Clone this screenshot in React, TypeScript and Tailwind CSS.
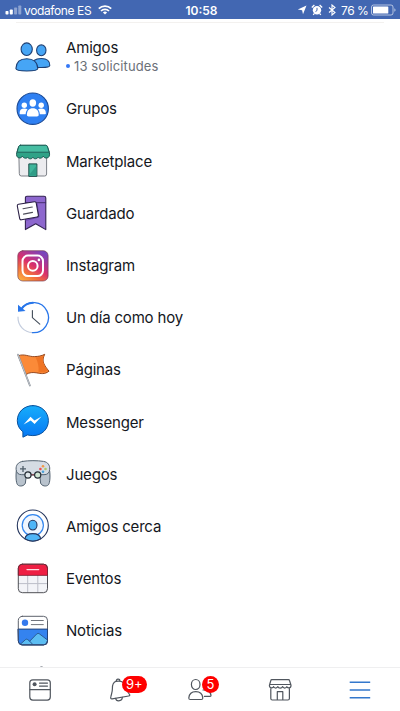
import type { ReactNode } from "react";

function Icon({ children }: { children: ReactNode }) {
  return (
    <svg viewBox="0 0 36 36" className="h-9 w-9 shrink-0" fill="none" strokeLinecap="round" strokeLinejoin="round">
      {children}
    </svg>
  );
}

const friends = (
  <Icon>
    <g fill="#46a5f5" stroke="#1d3f73" strokeWidth="1.1">
      <ellipse cx="26.3" cy="11.3" rx="4.7" ry="5.4" />
      <path d="M19 21.5c2-1.6 4.500-2 7.500-2 5 0 8.300 2.300 8.300 7 0 1.600-3.800 2-8.300 2h-6z" />
      <ellipse cx="11.700" cy="10.200" rx="5.600" ry="6.300" />
      <path d="M.9 29.500c.3-6.500 4.800-9.700 10.900-9.700s10.700 3.200 11 9.700c0 2-5.500 2.500-11 2.500S.9 31.500.9 29.500z" />
    </g>
  </Icon>
);

const groups = (
  <Icon>
    <circle cx="17.700" cy="17.700" r="15.700" fill="#2f80f2" stroke="#1c4a95" strokeWidth="1.100" />
    <g fill="#fff">
      <circle cx="9.300" cy="14.200" r="2.700" />
      <circle cx="26.200" cy="14.200" r="2.700" />
      <path d="M4.600 22.200c0-3.200 1.800-4.600 4.700-4.600 1.300 0 2.400.4 3.200 1-1.200 1.200-1.700 2.800-1.800 4.600H6c-.9 0-1.400-.3-1.400-1z" />
      <path d="M30.900 22.200c0-3.200-1.800-4.600-4.700-4.600-1.300 0-2.400.4-3.200 1 1.200 1.200 1.700 2.800 1.800 4.600h4.700c.9 0 1.400-.3 1.400-1z" />
      <ellipse cx="17.800" cy="12" rx="3.300" ry="3.700" />
      <path d="M11.900 23.800c0-4.300 2.200-6.500 5.900-6.500s5.900 2.200 5.900 6.500c0 1.200-.6 1.700-1.800 1.700h-8.200c-1.200 0-1.800-.5-1.800-1.700z" />
    </g>
  </Icon>
);

const marketplace = (
  <Icon>
    <path d="M4.300 13h27.300v18a2 2 0 0 1-2 2H6.300a2 2 0 0 1-2-2z" fill="#ececef" stroke="#7c8087" />
    <path d="M13.800 33V20.900h8.100V33z" fill="#3fb59b" stroke="#1f4f4b" />
    <path d="M14.500 31.500l6.800-8.500v9.500h-6.800z" fill="#2f9d87" />
    <path d="M5.500 2.300h25.200q1.300 0 1.700 1.300l2.100 6.200c.4 3-.6 5-2.600 5.200-1.900.2-3-.6-3.600-1.800-1 2-4 2.800-5.200 1-1.400 2-4 2.200-5.200.1-1.200 2.100-4 2-5.200-.1-1.300 1.800-4.300 1-5.300-1-.8 1.300-2 2-3.500 1.700-2-.5-2.700-2.500-2.200-5.100l2-6.200q.5-1.300 1.800-1.300z" fill="#2fa287" stroke="#1e5953" />
    <path d="M5.500 2.300h25.200q1.300 0 1.700 1.300l1.700 5.600H2.100l1.600-5.600q.5-1.300 1.800-1.300z" fill="#46bda2" stroke="#1e5953" strokeWidth=".9" />
  </Icon>
);

const saved = (
  <Icon>
    <path d="M12 1.300h17q1.800 0 1.800 1.800v31.500l-10.100-5.900-10.300 5.900V2.900q0-1.600 1.600-1.600z" fill="#8d67ce" stroke="#322252" strokeWidth="1.100" />
    <path d="M10.700 7.700h20" stroke="#3e2865" strokeWidth=".9" />
    <path d="M22 8l2 14-11.500 3h-2" stroke="#6745a8" strokeWidth="1" />
    <path d="M3.500 9.300l16-2.500q1.500-.2 1.700 1.200l2.200 12.200q.2 1.500-1.300 1.800L6.500 24.800q-1.500.3-1.800-1.200L2.300 11q-.2-1.500 1.200-1.700z" fill="#fff" stroke="#2a1f45" strokeWidth="1.100" />
    <path d="M8 13.700l9.300-1.700M8.500 19.100l9-1.700" stroke="#4d4d59" strokeWidth="1.100" />
  </Icon>
);

const instagram = (
  <Icon>
    <defs>
      <linearGradient id="ig" x1=".1" y1="1" x2=".75" y2="0">
        <stop offset="0" stopColor="#fdb33e" />
        <stop offset=".28" stopColor="#f3713c" />
        <stop offset=".55" stopColor="#d9306c" />
        <stop offset=".8" stopColor="#a43a9b" />
        <stop offset="1" stopColor="#7746bd" />
      </linearGradient>
    </defs>
    <rect x="2.800" y="2.700" width="30.300" height="30.300" rx="5" fill="url(#ig)" stroke="#774054" strokeOpacity=".75" strokeWidth=".9" />
    <rect x="7.500" y="7.600" width="20.500" height="20.500" rx="5.500" stroke="#fff" strokeWidth="2" />
    <circle cx="17.800" cy="17.900" r="4.800" stroke="#fff" strokeWidth="2" />
    <circle cx="23.900" cy="11.900" r="1.300" fill="#fff" />
  </Icon>
);

const onThisDay = (
  <Icon>
    <path d="M17.500 32.600A15 15 0 0 1 3 17" stroke="#c4cdde" strokeWidth="1.200" />
    <path d="M6.200 9A15 15 0 1 1 17.500 32.600" stroke="#2876ea" strokeWidth="1.300" />
    <path d="M6.500 9A14.500 14.500 0 0 1 18 2.800" stroke="#2876ea" strokeWidth="2" />
    <path d="M3 4.800v7l7.500-.7z" fill="#2876ea" />
    <path d="M17.400 10.500v7.200l7.400 6.400" stroke="#424c59" strokeWidth="1.100" />
  </Icon>
);

const pages = (
  <Icon>
    <path d="M3.700 3.600c5.500-2.200 10.800 1.400 16 1 3.700-.2 6.700-.6 10-2.300-1.600 3.500-2.200 6-1 8.900 1 2.600 3 5.200 5.300 8-4.500 3.500-8.300 2.300-12.200 1.700-4-.7-7.300-.6-10.700 1.500z" fill="#fb8a38" stroke="#8b3b12" strokeWidth=".9" />
    <path d="M20.500 5.200c3.500 0 5.900-.5 8.200-1.500-1.500 4.800-.4 8.800 4.300 14.900-4 2.500-7.600 1.700-9.500 1.300.5-4.900-.5-10.100-3-14.700z" fill="#ef7424" />
    <path d="M3 2.700L14.900 33.500" stroke="#8a9099" strokeWidth="1.800" />
    <path d="M3 2.700L14.900 33.500" stroke="#c2c7cd" strokeWidth=".9" />
  </Icon>
);

const messenger = (
  <Icon>
    <defs>
      <linearGradient id="ms" x1="0" y1="0" x2="0" y2="1">
        <stop offset="0" stopColor="#17adfb" />
        <stop offset="1" stopColor="#0678f4" />
      </linearGradient>
    </defs>
    <path d="M17.900 1.600C8.900 1.600 2.300 8.200 2.300 16.700c0 4.500 2.100 8.400 5.600 11.100v5.400l4.600-2.300c1.600.4 3.500.7 5.400.7 8.900 0 15.500-6.500 15.500-14.900S26.800 1.600 17.900 1.600z" fill="url(#ms)" stroke="#0b529d" strokeWidth="1" />
    <path d="M8.600 20.400l6.900-7.600 4 3.600 7-3.900-6.900 7.600-3.900-3.500z" fill="#fff" />
  </Icon>
);

const games = (
  <Icon>
    <path d="M1.300 15c-.6 5.500-.3 11.500 1.200 13.700 2.200 2.400 7 1.300 7.900-1.700l.9-8h13.400l.9 8c.9 3 5.700 4.100 7.900 1.700 1.500-2.200 1.800-8.200 1.200-13.700z" fill="#b9c3cd" stroke="#536270" />
    <path d="M7.500 5.400c6-1 15-1 21 0 4.500.7 6.500 3.900 6.200 7.900-.2 3.700-2.300 5.400-5.700 5.400H6.800c-3.400 0-5.500-1.700-5.700-5.400-.3-4 1.900-7.200 6.400-7.900z" fill="#d5dce4" stroke="#536270" />
    <path d="M5 12.900h6M8 9.900v6" stroke="#4f5e6a" strokeWidth="1.300" strokeLinecap="butt" />
    <path d="M16 18.800h4" stroke="#963d48" />
    <circle cx="13" cy="19" r="3.100" fill="#dfe6ea" stroke="#252d35" strokeWidth="1.200" />
    <circle cx="22.700" cy="19" r="3.100" fill="#cfe5d3" stroke="#252d35" strokeWidth="1.200" />
    <circle cx="28" cy="10.300" r="1.300" fill="#f39a45" />
    <circle cx="25.400" cy="13" r="1.300" fill="#ee4c4c" />
    <circle cx="30.500" cy="13" r="1.300" fill="#a9c96f" />
    <circle cx="28" cy="15.700" r="1.300" fill="#4ba1d9" />
  </Icon>
);

const nearby = (
  <Icon>
    <circle cx="17.800" cy="17.500" r="15.500" fill="#fff" stroke="#26375f" strokeWidth="1.100" />
    <circle cx="17.800" cy="17.300" r="10.600" fill="#f0f6ff" stroke="#3386ee" strokeWidth="1.200" />
    <path d="M9.900 30.800c.5-3.800 3.300-5.200 7.900-5.200s7.400 1.400 7.900 5.200a15.500 15.500 0 0 1-15.800 0z" fill="#4fb5f7" stroke="#26375f" strokeWidth="1.100" />
    <ellipse cx="17.800" cy="17.100" rx="4.200" ry="4.900" fill="#4fb5f7" stroke="#26375f" strokeWidth="1.100" />
  </Icon>
);

const events = (
  <Icon>
    <rect x="3.300" y="3.200" width="29.200" height="28.500" rx="4" fill="#f3f4f8" />
    <path d="M12.700 14v17.500M22.800 14v17.500M3.500 22.600h29" stroke="#bcbec8" strokeWidth="1" />
    <path d="M3.300 14V7.200a4 4 0 0 1 4-4h21.200a4 4 0 0 1 4 4V14z" fill="#ee1f43" />
    <rect x="3.300" y="3.200" width="29.200" height="28.500" rx="4" stroke="#4f5056" />
    <path d="M3.300 14V7.200a4 4 0 0 1 4-4h21.200a4 4 0 0 1 4 4V14z" stroke="#86182c" strokeWidth=".9" />
    <path d="M12 8.600h11.700" stroke="#ffdce1" strokeWidth="1.300" />
  </Icon>
);

const news = (
  <Icon>
    <rect x="3.300" y="3.300" width="29.200" height="28.600" rx="4" fill="#fff" />
    <path d="M3.300 16.100h29.200v11.800a4 4 0 0 1-4 4H7.300a4 4 0 0 1-4-4z" fill="#3483ef" />
    <path d="M5.400 31.200l5.100-4.600q1.100-.9 2.200 0l2 1.600 6.900-7.100q1.500-1.500 3-.1l7.900 6v.9a4 4 0 0 1-4 4H7.300q-1.200 0-1.900-.7z" fill="#5cbdf2" stroke="#26528b" strokeWidth=".9" />
    <path d="M14.700 28.200l2.800 3" stroke="#26528b" strokeWidth=".9" />
    <rect x="3.300" y="3.300" width="29.200" height="28.600" rx="4" stroke="#5d626c" />
    <path d="M3.300 16.100h29.200v11.800a4 4 0 0 1-4 4H7.300a4 4 0 0 1-4-4z" stroke="#24437a" />
    <circle cx="10" cy="9.700" r="3.200" fill="#3479ed" />
    <path d="M16.300 7.500h12M16.300 11.600h12" stroke="#70747c" />
  </Icon>
);

const items: { label: string; icon: ReactNode; note?: string }[] = [
  { label: "Amigos", icon: friends, note: "13 solicitudes" },
  { label: "Grupos", icon: groups },
  { label: "Marketplace", icon: marketplace },
  { label: "Guardado", icon: saved },
  { label: "Instagram", icon: instagram },
  { label: "Un día como hoy", icon: onThisDay },
  { label: "Páginas", icon: pages },
  { label: "Messenger", icon: messenger },
  { label: "Juegos", icon: games },
  { label: "Amigos cerca", icon: nearby },
  { label: "Eventos", icon: events },
  { label: "Noticias", icon: news },
];

function StatusBar() {
  return (
    <header className="grid h-[19px] shrink-0 grid-cols-[1fr_auto_1fr] items-center bg-[#4267b2] text-[12px] leading-[19px] text-white">
      <div className="flex items-center pl-[5px]">
        <svg viewBox="0 0 17 10" className="h-[10px] w-[17px]" fill="#fff">
          <rect x=".5" y="6" width="3" height="3.500" rx=".7" />
          <rect x="4.800" y="4.500" width="3" height="5" rx=".7" />
          <rect x="9.100" y="2.500" width="3" height="7" rx=".7" opacity=".4" />
          <rect x="13.300" y=".5" width="3" height="9" rx=".7" opacity=".4" />
        </svg>
        <span className="ml-[2px] w-[68px] whitespace-nowrap pt-px tracking-[-0.38px]">vodafone ES</span>
        <svg viewBox="0 0 14 10" className="ml-[6px] h-[10px] w-[14px]" fill="none" stroke="#fff" strokeWidth="1.700">
          <path d="M.8 3.600a8.800 8.800 0 0 1 12.400 0M3 6a5.700 5.700 0 0 1 8 0" />
          <path d="M7 9.600L4.900 7.500a3 3 0 0 1 4.200 0z" fill="#fff" stroke="none" />
        </svg>
      </div>
      <span className="pt-px pl-[3px] text-[12px] font-semibold">10:58</span>
      <div className="flex items-center justify-end pr-[4px]">
        <svg viewBox="0 0 10 10" className="h-[10px] w-[10px]" fill="#fff">
          <path d="M9.500.6L6 9.300 5.100 5.200.8 4.400z" />
        </svg>
        <svg viewBox="0 0 12 12" className="ml-[4px] h-[12px] w-[12px]">
          <circle cx="6" cy="6.300" r="4.200" fill="#fff" />
          <path d="M.8 3.400L3.400 1M11.200 3.400L8.600 1M3.200 9.600l-1 1.200M8.800 9.600l1 1.200" stroke="#fff" strokeWidth="1.300" />
          <path d="M6 3.800v2.700L4.500 7.600" stroke="#4267b2" fill="none" />
        </svg>
        <svg viewBox="0 0 8 12" className="ml-[5px] h-[12px] w-[8px]" fill="none" stroke="#fff" strokeWidth="1.100">
          <path d="M1 3.500l6 5L4 11V1l3 2.500-6 5" />
        </svg>
        <span className="ml-[5px] w-[28px] whitespace-nowrap pt-px tracking-[-0.45px]">76 %</span>
        <svg viewBox="0 0 25 12" className="ml-[2px] h-[12px] w-[25px]" fill="#fff">
          <rect x=".5" y="1" width="21.500" height="10" rx="2" fill="none" stroke="#fff" strokeOpacity=".6" />
          <rect x="2" y="2.500" width="15.300" height="7" rx=".6" />
          <path d="M23.300 4.300q1.300.4 1.300 1.700t-1.300 1.700z" opacity=".6" />
        </svg>
      </div>
    </header>
  );
}

function NavIcon({ children }: { children: ReactNode }) {
  return (
    <svg viewBox="0 0 24 24" className="h-6 w-6" fill="none" stroke="#50565e" strokeWidth="1.200" strokeLinecap="round" strokeLinejoin="round">
      {children}
    </svg>
  );
}

function TabBar() {
  return (
    <nav className="grid h-[44px] shrink-0 grid-cols-5 place-items-center border-t border-[#efeff0] bg-white">
      <NavIcon>
        <rect x="1.800" y="1.800" width="20.500" height="20.300" rx="3" />
        <path d="M2 11.600h20.200M11.500 5.100h8M11.500 8.100h8" />
        <circle cx="6.600" cy="6.300" r="2" fill="#50565e" stroke="none" />
      </NavIcon>
      <div className="relative h-6 w-6">
        <NavIcon>
          <path d="M8.200 3.200c-.2-1 .6-2 1.700-2.100s2 .5 2.100 1.500M8 3.300c-3 1.200-3.700 4.100-3.600 7.300.1 3.500-1 5.700-1.500 7.800-.5 1.900-.1 2.700 1.300 2.500l16.500-2.900c1.200-.2 1.500-1 .6-1.900-2-1.900-2.700-3.700-3.300-6.600-.8-4-3.300-7.400-10-6.200z" />
          <path d="M7.600 20.400c.4 1.900 2 2.700 4 2.300 1.900-.4 2.800-1.500 2.700-3.400" />
        </NavIcon>
        <span className="absolute top-[-2px] left-[13.500px] flex h-[17.500px] w-[25.500px] items-center justify-center rounded-full bg-[#fe0000] text-[13px] text-white">9+</span>
      </div>
      <div className="relative h-6 w-6">
        <NavIcon>
          <path d="M15 12c3.600-.5 7.500 1.600 8 5.400 0 .7-.5 1-1.300 1h-5.300" />
          <ellipse cx="7.700" cy="6.500" rx="4.300" ry="5" />
          <path d="M.8 20c.4-4.500 2.700-6.300 7-6.300s6.600 1.800 7 6.300c0 1-.5 1.500-1.500 1.500H2.300c-1 0-1.500-.5-1.500-1.500z" />
        </NavIcon>
        <span className="absolute top-[-2px] left-[13.700px] flex h-[17.500px] w-[17.500px] items-center justify-center rounded-full bg-[#fe0000] text-[13px] text-white">5</span>
      </div>
      <NavIcon>
        <path d="M3.800 1.700h16.700q.8 0 1 .8l1.500 4.800c0 1.700-.7 2.600-2 2.600s-2.200-.8-2.200-1.300c-.7 1.900-3.500 1.900-4.300 0-.6 1.900-4 1.900-4.600 0-.8 1.900-3.600 1.900-4.300 0 0 .5-.9 1.300-2.200 1.300s-2-.9-2-2.600l1.400-4.800q.2-.8 1-.8zM1.600 6.500h21M2.800 10.500v10q0 1.500 1.500 1.500h15.600q1.500 0 1.500-1.500v-10M9.300 22v-8.300h5.500V22" />
      </NavIcon>
      <svg viewBox="0 0 24 24" className="h-6 w-6" stroke="#3478cc" strokeWidth="1.500">
        <path d="M1.700 4.200h20.500M1.700 12h20.500M1.700 19.700h20.500" />
      </svg>
    </nav>
  );
}

export default function App() {
  return (
    <div className="flex h-[711px] w-[400px] flex-col overflow-hidden bg-white font-['Inter',sans-serif]">
      <StatusBar />
      <div className="mx-4 mt-[3px] h-px shrink-0 bg-[#f3f1ef]" />
      <main className="min-h-0 flex-1 overflow-hidden pt-[7.700px]">
        <ul>
          {items.map((item) => (
            <li key={item.label} className="flex h-[52.200px] items-center gap-[15px] pl-[15px]">
              {item.icon}
              <div className="text-[15px] leading-[19px] tracking-[-0.18px] text-[#14171d]">
                <div>{item.label}</div>
                {item.note && (
                  <div className="flex items-center gap-1 text-[13px] tracking-[0.12px] text-[#6b7078]">
                    <span className="h-1 w-1 rounded-full bg-[#3478f6]" />
                    {item.note}
                  </div>
                )}
              </div>
            </li>
          ))}
        </ul>
        <div className="mt-[9.500px] ml-[39.500px] h-1 w-[3px] rounded-full bg-[#a4a8ae]" />
      </main>
      <TabBar />
    </div>
  );
}
